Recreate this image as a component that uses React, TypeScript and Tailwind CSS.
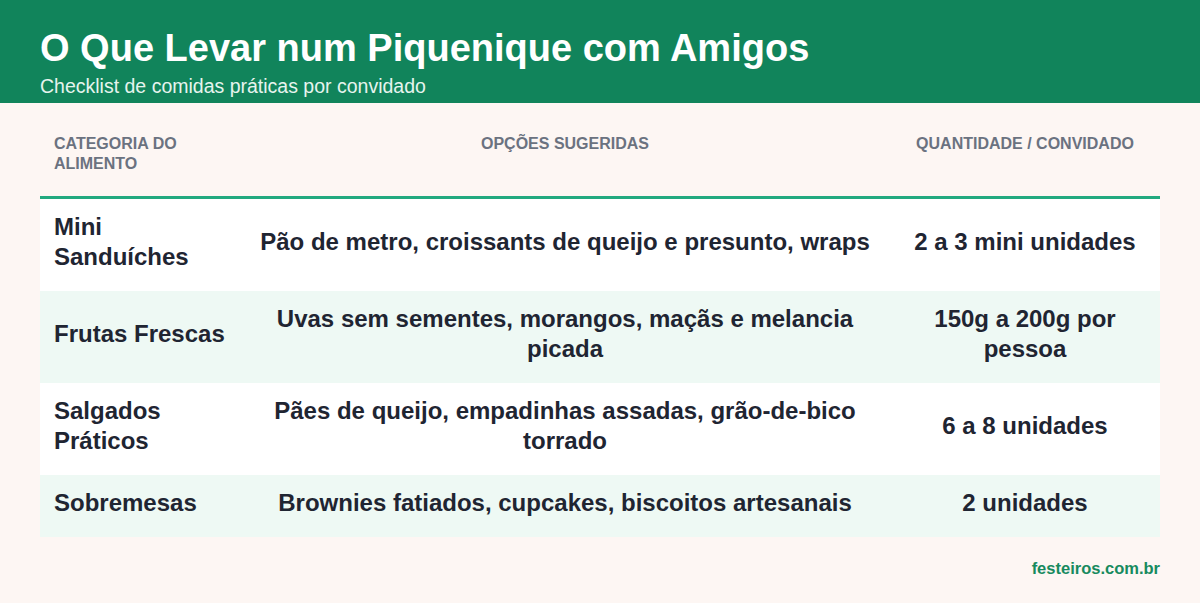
const rows = [
  {
    cat: "Mini Sanduíches",
    opts: "Pão de metro, croissants de queijo e presunto, wraps",
    qty: "2 a 3 mini unidades",
  },
  {
    cat: "Frutas Frescas",
    opts: "Uvas sem sementes, morangos, maçãs e melancia picada",
    qty: "150g a 200g por pessoa",
  },
  {
    cat: "Salgados Práticos",
    opts: "Pães de queijo, empadinhas assadas, grão-de-bico torrado",
    qty: "6 a 8 unidades",
  },
  {
    cat: "Sobremesas",
    opts: "Brownies fatiados, cupcakes, biscoitos artesanais",
    qty: "2 unidades",
  },
];

export default function App() {
  return (
    <div className="w-[1200px] h-[603px] bg-[#fdf6f3] font-['Liberation_Sans',Arial,sans-serif] overflow-hidden">
      {/* Header */}
      <header className="bg-[#11845b] h-[103px] px-10 pt-[25px]">
        <h1 className="text-white font-bold text-[38px] leading-[46px]">
          O Que Levar num Piquenique com Amigos
        </h1>
        <p className="text-[#e6f4ee] text-[19.5px] leading-[24px] mt-[3px]">
          Checklist de comidas práticas por convidado
        </p>
      </header>

      <main className="px-10 pt-[21px]">
        <table className="w-full border-collapse table-fixed">
          <colgroup>
            <col className="w-[200px]" />
            <col className="w-[650px]" />
            <col />
          </colgroup>
          <thead>
            <tr className="border-b-[3px] border-[#22a97f]">
              <th className="text-left align-top px-[14px] pt-[10px] pb-[22px] text-[16px] leading-[20px] font-bold uppercase text-[#6b7280]">
                Categoria do alimento
              </th>
              <th className="text-center align-top px-[14px] pt-[10px] pb-[22px] text-[16px] leading-[20px] font-bold uppercase text-[#6b7280]">
                Opções sugeridas
              </th>
              <th className="text-center align-top px-[14px] pt-[10px] pb-[22px] text-[16px] leading-[20px] font-bold uppercase text-[#6b7280]">
                Quantidade / Convidado
              </th>
            </tr>
          </thead>
          <tbody>
            {rows.map((r, i) => (
              <tr key={r.cat} className={i % 2 === 0 ? "bg-white" : "bg-[#eef9f4]"}>
                <td className="px-[14px] pt-[13px] pb-[19px] text-left text-[24px] leading-[30px] font-bold text-[#1f2532]">
                  {r.cat}
                </td>
                <td className="px-[14px] pt-[13px] pb-[19px] text-center text-[24px] leading-[30px] font-bold text-[#1f2532]">
                  {r.opts}
                </td>
                <td className="px-[14px] pt-[13px] pb-[19px] text-center text-[24px] leading-[30px] font-bold text-[#1f2532]">
                  {r.qty}
                </td>
              </tr>
            ))}
          </tbody>
        </table>

        <div className="text-right pt-[21px] text-[16.5px] leading-[20px] font-bold text-[#178a5e]">
          festeiros.com.br
        </div>
      </main>
    </div>
  );
}
